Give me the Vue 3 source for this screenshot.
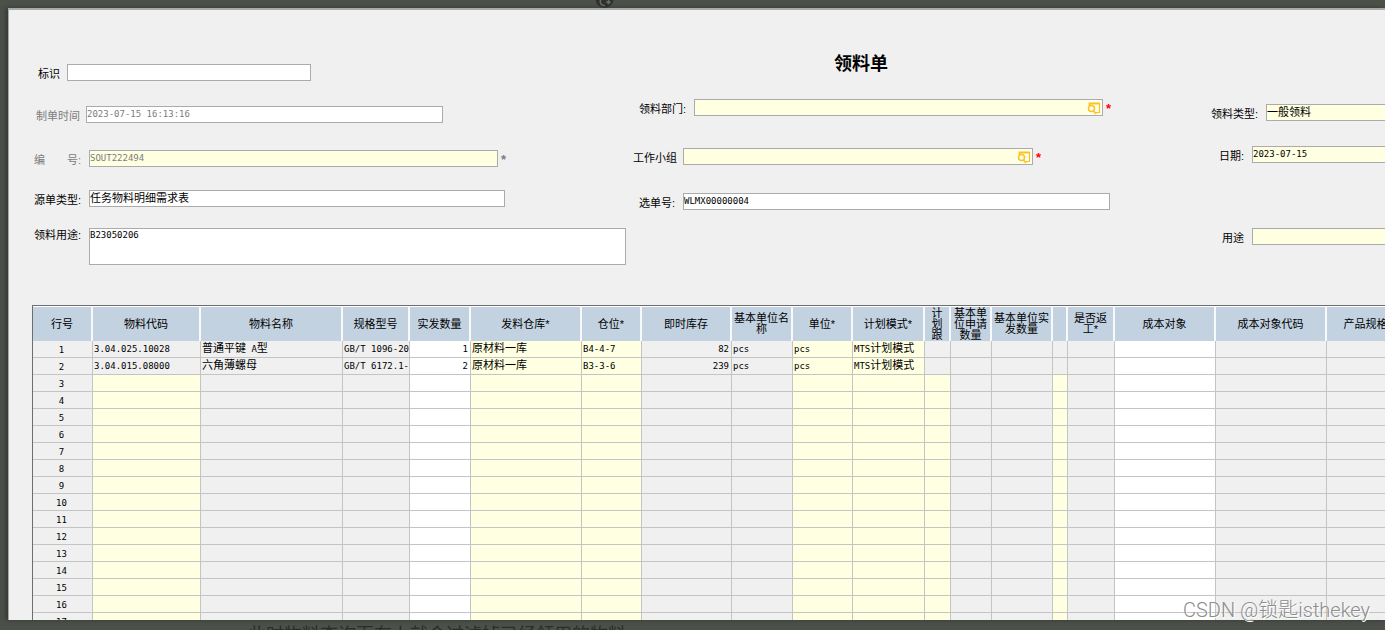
<script setup>
import { ref } from 'vue'

const left = ref([
  { id: 'mark', label: '标识', value: '', cls: 'w-mark' },
  { id: 'created', label: '制单时间', value: '2023-07-15 16:13:16', cls: 'w-created muted', mono: true },
  { id: 'number', label: '编　　号:', value: 'SOUT222494', cls: 'w-number muted must', mono: true, star: true },
  { id: 'source', label: '源单类型:', value: '任务物料明细需求表', cls: 'w-source' },
  { id: 'purpose', label: '领料用途:', value: 'B23050206', cls: 'w-purpose', mono: true, area: true }
])
const middle = ref([
  { id: 'dept', label: '领料部门:', value: '', cls: 'w-dept must', search: true, star: true },
  { id: 'group', label: '工作小组', value: '', cls: 'w-group must', search: true, star: true },
  { id: 'pick', label: '选单号:', value: 'WLMX00000004', cls: 'w-pick', mono: true }
])
const right = ref([
  { id: 'kind', label: '领料类型:', value: '一般领料', cls: 'w-kind must' },
  { id: 'date', label: '日期:', value: '2023-07-15', cls: 'w-date must', mono: true },
  { id: 'use', label: '用途', value: '', cls: 'w-date must' }
])
const groups = [
  { name: 'left', fields: left },
  { name: 'middle', fields: middle },
  { name: 'right', fields: right }
]

const columns = [
  { t: '行号', w: 60, c: 'num' },
  { t: '物料代码', w: 108, c: 'late' },
  { t: '物料名称', w: 142 },
  { t: '规格型号', w: 67 },
  { t: '实发数量', w: 61, c: 'white end' },
  { t: '发料仓库*', w: 111, c: 'yellow' },
  { t: '仓位*', w: 60, c: 'yellow' },
  { t: '即时库存', w: 90, c: 'end' },
  { t: '基本单位名称', w: 61 },
  { t: '单位*', w: 60, c: 'yellow' },
  { t: '计划模式*', w: 72, c: 'yellow' },
  { t: '计划跟', w: 26, c: 'late', h: 'narrow' },
  { t: '基本单位申请数量', w: 41 },
  { t: '基本单位实发数量', w: 61 },
  { t: '', w: 15, c: 'late' },
  { t: '是否返工*', w: 47, h: 'narrow' },
  { t: '成本对象', w: 101, c: 'white' },
  { t: '成本对象代码', w: 111 },
  { t: '产品规格型号', w: 101 }
]
const data = [
  ['1', '3.04.025.10028', '普通平键 A型', 'GB/T 1096-2003', '1', '原材料一库', 'B4-4-7', '82', 'pcs', 'pcs', 'MTS计划模式'],
  ['2', '3.04.015.08000', '六角薄螺母', 'GB/T 6172.1-2016', '2', '原材料一库', 'B3-3-6', '239', 'pcs', 'pcs', 'MTS计划模式']
]
const rows = Array.from({ length: 17 }, (_, i) => data[i] || [String(i + 1)])

// Splits a value into half-width and full-width runs
const runs = (s) => (s ? s.match(/[\x00-\x7f]+|[^\x00-\x7f]+/g) : [])
const half = (s) => s.charCodeAt(0) < 128
</script>

<template>
  <div class="backdrop">
    <div class="topbar">
      <svg class="badge" width="20" height="8" viewBox="0 0 20 8">
        <circle cx="9.500" cy="-1" r="9" fill="#2f302f" />
        <path d="M7 -2C4 1 5 6 10 5.500M13.500 0v3M11.500 1.500l2 2l2-2" fill="none" stroke="#696c69" stroke-width="1.500" />
      </svg>
    </div>
    <main class="dialog">
      <h1>领料单</h1>
      <form class="form" @submit.prevent>
        <div v-for="g in groups" :key="g.name" class="group" :class="g.name">
          <div v-for="f in g.fields.value" :key="f.id" class="field" :class="f.cls">
            <label :for="f.id">{{ f.label }}</label>
            <textarea v-if="f.area" :id="f.id" v-model="f.value" class="box mono"></textarea>
            <span v-else class="box">
              <input :id="f.id" v-model="f.value" type="text" :class="{ mono: f.mono }" />
              <button v-if="f.search" type="button" :aria-label="f.label">
                <svg width="14" height="13" viewBox="0 0 14 13" fill="none" stroke="#ffc21c">
                  <path d="M2.500 4V1.500H13" stroke-width="1.800" />
                  <path d="M12.500 1V10.500H9" stroke-width="1.200" />
                  <circle cx="4.500" cy="6.500" r="3" stroke-width="1.500" />
                  <path d="M6.500 9L9 12" stroke-width="1.800" />
                </svg>
              </button>
            </span>
            <span v-if="f.star" class="star">*</span>
          </div>
        </div>
      </form>
      <div class="sheet">
        <table>
          <colgroup>
            <col v-for="(c, i) in columns" :key="i" :style="{ width: c.w + 'px' }" />
          </colgroup>
          <thead>
            <tr><th v-for="(c, i) in columns" :key="i" :class="c.h"><div>{{ c.t }}</div></th></tr>
          </thead>
          <tbody>
            <tr v-for="(r, n) in rows" :key="n" :class="{ blank: n > 1 }">
              <td v-for="(c, i) in columns" :key="i" :class="c.c">
                <div><span v-for="(s, k) in runs(r[i])" :key="k" :class="{ mono: half(s) }">{{ s }}</span></div>
              </td>
            </tr>
          </tbody>
        </table>
      </div>
    </main>
    <div class="watermark">CSDN @锁匙isthekey</div>
    <footer><p>此时物料查询页在上就会过滤掉已经领用的物料、</p></footer>
  </div>
</template>

<style>
body { background: #4b5049; overflow: hidden; }
</style>

<style scoped>
* { box-sizing: border-box; }
.backdrop {
  height: 100vh;
  display: flex;
  flex-direction: column;
  overflow: hidden;
  position: relative;
  background: #4b5049;
  color: #000;
  font: 11px/14px "Liberation Sans", "Noto Sans CJK SC", sans-serif;
}
.topbar { height: 8px; flex: none; padding-left: 595px; }
.badge { display: block; }
.dialog {
  flex: 1;
  min-height: 0;
  margin-left: 8px;
  border-top: 2px solid #a8a9a8;
  border-left: 1px solid #a8a9a8;
  background: #f0f0f0;
  overflow: hidden;
  padding-left: 23px;
  box-shadow: -2px 0 4px #333733;
}
h1 {
  margin: 42px 0 0 802px;
  font-size: 18px;
  line-height: 24px;
  font-weight: 600;
}
.form {
  display: grid;
  grid-template-columns: 599px 578px 1fr;
  height: 229px;
}
.group { display: grid; align-content: start; }
.left { grid-template-rows: 42px 44px 40px 38px 40px; margin-top: -12px; padding-left: 2px; }
.middle { grid-template-rows: 49px 45px 20px; margin-top: 23px; padding-left: 2px; }
.right { grid-template-rows: 42px 82px 20px; margin-top: 28px; }
.field { display: flex; align-items: flex-start; white-space: nowrap; }
label { flex: none; text-align: right; padding: 3px 8px 0 0; width: 55px; }
.w-mark label { width: 33px; padding-right: 7px; }
.w-created label { width: 52px; padding-right: 6px; }
.w-purpose label { padding-top: 0; }
.w-dept label { width: 61px; }
.w-group label, .w-pick label { width: 50px; }
.w-group label { padding-right: 7px; }
.w-kind label { width: 57px; }
.w-date label { width: 43px; }
.muted { color: #7c7c7c; }
.box {
  display: flex;
  height: 17px;
  width: 416px;
  border: 1px solid #ababab;
  background: #fff;
  flex: none;
}
.must .box { background: #ffffe1; }
.w-mark .box { width: 244px; }
.w-created .box { width: 357px; }
.w-number .box, .w-dept .box { width: 409px; }
.w-group .box { width: 350px; }
.w-pick .box { width: 427px; }
.w-purpose .box { width: 537px; height: 37px; }
.w-kind .box, .w-date .box { width: 200px; }
input {
  flex: 1;
  min-width: 0;
  border: 0;
  padding: 0 0 1px;
  background: transparent;
  color: inherit;
  font: inherit;
  outline: none;
}
textarea { resize: none; padding: 0; outline: none; line-height: 12px; color: inherit; }
.mono { font-family: "DejaVu Sans Mono", monospace; font-size: 9px; }
button { border: 0; padding: 1px 0 0; width: 15px; background: #fffff0; }
button svg { display: block; }
.star { color: #f00; font-weight: 700; padding: 3px 0 0 3px; font-size: 13px; }
.muted .star { color: #7c7c7c; }
.sheet { border-top: 1px solid #6e6e6e; border-left: 1px solid #6e6e6e; overflow: hidden; }
table { table-layout: fixed; border-collapse: separate; border-spacing: 0; width: 1395px; }
th {
  height: 35px;
  padding: 0;
  background: #c3d2e1;
  border-top: 1px solid #fff;
  border-right: 2px solid #f7f9fb;
  font-weight: 400;
  line-height: 11px;
}
th div { height: 34px; display: flex; align-items: center; justify-content: center; }
.narrow div { padding: 0 5px; }
td {
  height: 17px;
  padding: 0;
  border-right: 1px solid #c4c4c4;
  border-bottom: 1px solid #c4c4c4;
  background: #f0f0f0;
}
td div { height: 16px; padding-left: 1px; line-height: 14px; overflow: hidden; white-space: nowrap; }
.num div { text-align: center; line-height: 16px; padding: 0 2px 0 0; }
.end div { text-align: right; padding-right: 2px; }
.white { background: #fff; }
.yellow, .blank .late { background: #ffffe1; }
.watermark {
  position: absolute;
  right: 15px;
  bottom: 9px;
  font-family: Roboto, "Noto Sans CJK SC", sans-serif;
  font-size: 20px;
  font-weight: 300;
  line-height: 22px;
  color: #8c8c8c;
  text-shadow: 1px 1px 0 #fff;
}
footer { height: 10px; flex: none; padding-left: 248px; overflow: hidden; }
footer p { margin: 5px 0 0; font-size: 18px; line-height: 20px; color: #2b2d2a; white-space: nowrap; }
</style>
